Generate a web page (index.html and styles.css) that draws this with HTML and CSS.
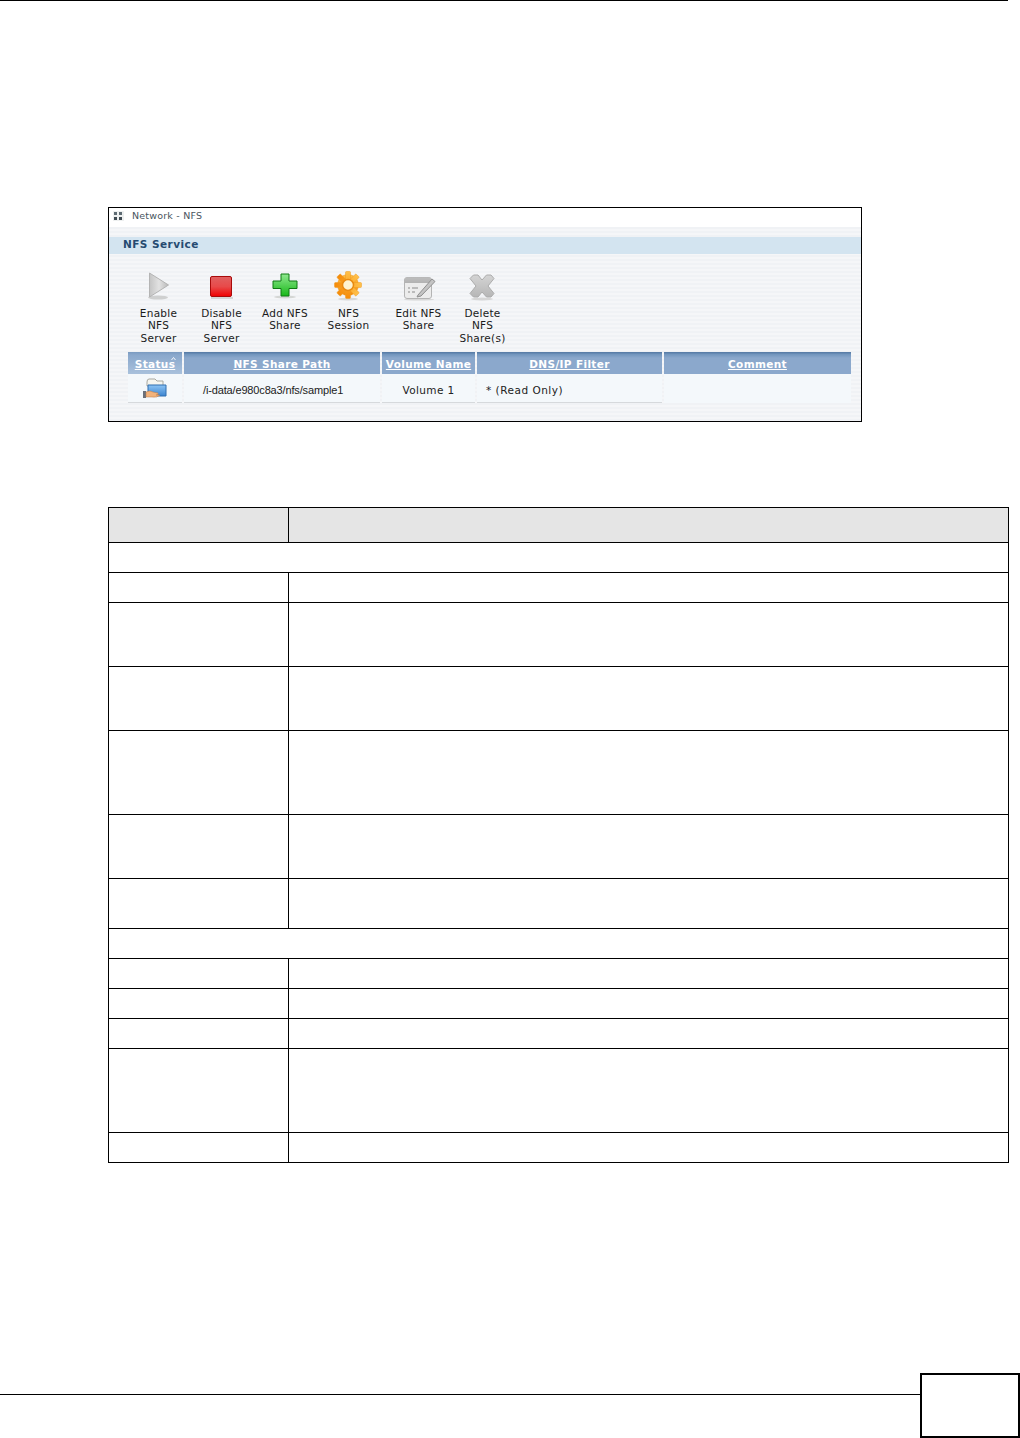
FILE: index.html
```html
<!DOCTYPE html>
<html lang="en">
<head>
<meta charset="utf-8">
<title>NFS Service</title>
<link rel="stylesheet" href="styles.css">
</head>
<body>
<div class="page">
  <div class="top-rule"></div>

  <figure class="shot">
    <div class="crumb">
      <svg class="crumb-icon" width="11" height="10" viewBox="0 0 11 10"><rect width="11" height="10" fill="#eef0f0"/><rect x="1" y="1" width="3" height="3" fill="#5d6a72"/><rect x="6" y="1" width="3" height="3" fill="#5d6a72"/><rect x="1" y="6" width="3" height="3" fill="#3f4a52"/><rect x="6" y="6" width="3" height="3" fill="#3f4a52"/></svg>
      <span>Network - NFS</span>
    </div>
    <div class="panel">
      <div class="band">NFS Service</div>
      <div class="toolbar">
        <div class="tool">
          <svg class="tool-icon" width="40" height="30" viewBox="0 0 40 30"><defs><linearGradient id="gp" x1="0" y1="0" x2="1" y2="0"><stop offset="0" stop-color="#c4c4c4"/><stop offset=".5" stop-color="#e2e2e2"/><stop offset="1" stop-color="#b9b9b9"/></linearGradient></defs><ellipse cx="19" cy="26.500" rx="10" ry="2" fill="#cfd0d0"/><path d="M10.500 2 L29.500 14 L10.500 26 Z" fill="url(#gp)" stroke="#b4b4b4" stroke-linejoin="round"/></svg>
          <span>Enable<br>NFS<br>Server</span>
        </div>
        <div class="tool">
          <svg class="tool-icon" width="40" height="30" viewBox="0 0 40 30"><defs><linearGradient id="gs" x1="0" y1="0" x2="0" y2="1"><stop offset="0" stop-color="#e06060"/><stop offset=".5" stop-color="#e84a4a"/><stop offset="1" stop-color="#f00000"/></linearGradient></defs><rect x="9" y="26" width="22" height="2" fill="#d6d6d6"/><rect x="8.500" y="5.500" width="21" height="20" rx="1.500" fill="url(#gs)" stroke="#a80a0a"/></svg>
          <span>Disable<br>NFS<br>Server</span>
        </div>
        <div class="tool">
          <svg class="tool-icon" width="40" height="30" viewBox="0 0 40 30"><defs><linearGradient id="ga" x1="0" y1="0" x2="0" y2="1"><stop offset="0" stop-color="#8fe88f"/><stop offset="1" stop-color="#18b818"/></linearGradient></defs><ellipse cx="20" cy="26" rx="11" ry="1.500" fill="#d4d6d4"/><path d="M16 3 H24 V10 H32 V17.500 H24 V25 H16 V17.500 H8 V10 H16 Z" fill="url(#ga)" stroke="#0f7a12" stroke-linejoin="round"/></svg>
          <span>Add NFS<br>Share</span>
        </div>
        <div class="tool">
          <svg class="tool-icon" width="40" height="30" viewBox="0 0 40 30"><defs><linearGradient id="gg" x1="0" y1="0" x2="0" y2="1"><stop offset="0" stop-color="#ffc04a"/><stop offset="1" stop-color="#f58a08"/></linearGradient></defs><ellipse cx="19" cy="28" rx="10" ry="1.500" fill="#d8d8d8"/><g fill="url(#gg)" stroke="#ee9a20" stroke-width=".5"><circle cx="19" cy="14" r="10.500"/><rect x="16.500" y="0.500" width="5" height="27" rx="1"/><rect x="16.500" y="0.500" width="5" height="27" rx="1" transform="rotate(45 19 14)"/><rect x="16.500" y="0.500" width="5" height="27" rx="1" transform="rotate(90 19 14)"/><rect x="16.500" y="0.500" width="5" height="27" rx="1" transform="rotate(135 19 14)"/></g><circle cx="19" cy="14" r="5.500" fill="#fff3d0" stroke="#e98a10" stroke-width="1.500"/></svg>
          <span>NFS<br>Session</span>
        </div>
        <div class="tool">
          <svg class="tool-icon" width="40" height="30" viewBox="0 0 40 30"><defs><linearGradient id="ge" x1="0" y1="0" x2="0" y2="1"><stop offset="0" stop-color="#bdbdbd"/><stop offset="1" stop-color="#b2b2b2"/></linearGradient></defs><ellipse cx="20" cy="28.500" rx="15" ry="1" fill="#d8d8d8"/><rect x="5.500" y="6.500" width="27" height="21" rx="2.500" fill="#ececec" stroke="#b4b4b4"/><path d="M5.500 12 V9 Q5.500 6.500 8 6.500 H30 Q32.500 6.500 32.500 9 V12 Z" fill="url(#ge)"/><path d="M9 17 h2 M13 17 h6 M9 21 h2 M13 21 h3" stroke="#8a8a8a" fill="none"/><path d="M19 24 L33 8 L36 10.500 L22 25 L18 26 Z" fill="#c4c4c4" stroke="#8f8f8f" stroke-linejoin="round"/></svg>
          <span>Edit NFS<br>Share</span>
        </div>
        <div class="tool">
          <svg class="tool-icon" width="40" height="30" viewBox="0 0 40 30"><defs><linearGradient id="gx" x1="0" y1="0" x2="0" y2="1"><stop offset="0" stop-color="#d4d4d4"/><stop offset="1" stop-color="#b6b6b6"/></linearGradient></defs><ellipse cx="19" cy="28" rx="11" ry="1.500" fill="#d6d6d6"/><path d="M10.500 4 L15 4 L19 9 L23.500 4 L28 4 L31 7.500 L25 15 L31 22.500 L28 26 L23.500 26 L19 21 L15 26 L10.500 26 L7 22.500 L13 15 L7 7.500 Z" fill="url(#gx)" stroke="#acacac" stroke-linejoin="round"/></svg>
          <span>Delete<br>NFS<br>Share(s)</span>
        </div>
      </div>
      <table class="shares">
        <thead>
          <tr>
            <th class="col-status sorted"><a>Status</a><svg class="sort" width="5" height="7" viewBox="0 0 5 7"><path d="M0.500 3 L2.500 0.500 L4.500 3" fill="none" stroke="#f2f6fa"/></svg></th>
            <th class="col-path"><a>NFS Share Path</a></th>
            <th class="col-volume"><a>Volume Name</a></th>
            <th class="col-filter"><a>DNS/IP Filter</a></th>
            <th class="col-comment"><a>Comment</a></th>
          </tr>
        </thead>
        <tbody>
          <tr>
            <td class="icon-cell">
              <svg width="24" height="21" viewBox="0 0 24 21"><defs><linearGradient id="gf" x1="0" y1="0" x2="0" y2="1"><stop offset="0" stop-color="#8cc4f4"/><stop offset="1" stop-color="#3b84d0"/></linearGradient></defs><path d="M4 4 Q4 1 6 1 H12 L14 3 H20 V8 H4 Z" fill="#f6f6f0" stroke="#a8a8a0"/><path d="M5 7 H23 V18 H5 Z" fill="url(#gf)" stroke="#2e6eb0"/><rect x="0" y="13" width="3" height="7" fill="#6a6f78"/><path d="M3 14 Q7 12 10 14 L15 15 Q16 17 13 17 L17 17 Q14 20 9 19 L3 19 Z" fill="#f2b27a" stroke="#b87a48" stroke-width=".5"/></svg>
            </td>
            <td class="path">/i-data/e980c8a3/nfs/sample1</td>
            <td class="center">Volume 1</td>
            <td class="filter">* (Read Only)</td>
            <td class="empty"></td>
          </tr>
        </tbody>
      </table>
    </div>
  </figure>

  <table class="desc">
    <tr class="r35"><th class="c1"></th><th></th></tr>
    <tr class="r30"><td colspan="2"></td></tr>
    <tr class="r30"><td></td><td></td></tr>
    <tr class="r64"><td></td><td></td></tr>
    <tr class="r64"><td></td><td></td></tr>
    <tr class="r84"><td></td><td></td></tr>
    <tr class="r64"><td></td><td></td></tr>
    <tr class="r50"><td></td><td></td></tr>
    <tr class="r30"><td colspan="2"></td></tr>
    <tr class="r30"><td></td><td></td></tr>
    <tr class="r30"><td></td><td></td></tr>
    <tr class="r30"><td></td><td></td></tr>
    <tr class="r84"><td></td><td></td></tr>
    <tr class="r30"><td></td><td></td></tr>
  </table>

  <footer class="foot">
    <div class="foot-rule"></div>
    <div class="page-box"></div>
  </footer>
</div>
</body>
</html>
```
FILE: styles.css
```css
* { box-sizing: border-box; }
html, body { margin: 0; padding: 0; background: #fff; }
.page {
  width: 1020px;
  height: 1438px;
  display: flex;
  flex-direction: column;
  font-family: "DejaVu Sans", sans-serif;
  color: #1a1a1a;
  overflow: hidden;
}
.top-rule { height: 1px; background: #000; margin: 0 12px 0 0; flex: none; }

.shot {
  flex: none;
  margin: 206px 0 0 108px;
  width: 754px;
  height: 215px;
  border: 1px solid #000;
  display: flex;
  flex-direction: column;
  background: #fff;
}
.crumb {
  height: 15px;
  margin-bottom: 4px;
  display: flex;
  align-items: center;
  gap: 8px;
  padding-left: 4px;
  font-size: 9.500px;
  letter-spacing: .2px;
  color: #4a5560;
  flex: none;
}
.panel {
  flex: 1;
  padding-top: 10px;
  background: repeating-linear-gradient(180deg, #f0f2f5 0, #f0f2f5 2px, #f5f6f8 2px, #f5f6f8 4px);
}
.band {
  height: 17px;
  background: #d3e4f0;
  color: #254a70;
  font-weight: bold;
  font-size: 10.500px;
  letter-spacing: .45px;
  line-height: 15px;
  padding-left: 14px;
}
.toolbar {
  display: grid;
  grid-template-columns: 63px 63px 64px 63px 77px 51px;
  margin: 16px 0 0 18px;
  height: 82px;
  font-size: 10.500px;
  letter-spacing: .25px;
  line-height: 12.500px;
  text-align: center;
}
.tool { display: flex; flex-direction: column; align-items: center; white-space: nowrap; }
.tool-icon { display: block; margin: 1px 0 5.800px; flex: none; }

.shares {
  table-layout: fixed;
  width: 727px;
  margin-left: 17px;
  border-collapse: separate;
  border-spacing: 2px 0;
  font-size: 10.500px;
}
.shares th {
  height: 22px;
  padding: 2px 0 0;
  background: linear-gradient(180deg, #5a7ea8 0, #5a7ea8 1px, #7094bc 2px, #8ba8cc 6px, #8ba8cc 100%);
  color: #fff;
  font-size: 10.500px;
  font-weight: bold;
  letter-spacing: .35px;
  white-space: nowrap;
}
.shares th.sorted {
  background: linear-gradient(180deg, #7a9ac0 0, #8aa8cc 3px, #a9c1dc 100%);
  position: relative;
}
.shares th a { text-decoration: underline; }
.sort { position: absolute; right: 6px; top: 5px; }
.col-status { width: 54px; }
.col-path { width: 196px; }
.col-volume { width: 93px; }
.col-filter { width: 185px; }
.col-comment { width: 187px; }
.shares td {
  height: 29px;
  padding: 4px 0 0;
  background: #f4f8fb;
  border-bottom: 1px solid #d6d9dc;
  color: #222;
  letter-spacing: .35px;
}
.shares td.icon-cell { padding-top: 2px; }
.shares td.empty { border-bottom-color: #f4f8fb; }
.center { text-align: center; }
.shares td svg { display: block; margin: -1px auto 0; }
.shares td.path {
  font-family: "Liberation Sans", sans-serif;
  font-size: 11px;
  letter-spacing: -.15px;
  padding-left: 19px;
}
.shares td.filter { padding-left: 9px; letter-spacing: .5px; }

.desc {
  flex: none;
  margin: 85px 0 0 108px;
  width: 901px;
  border-collapse: collapse;
  table-layout: fixed;
}
.desc th, .desc td { border: 1px solid #000; padding: 0; }
.desc th { background: #e5e5e5; }
.c1 { width: 180px; }
.r30 { height: 30px; }
.r35 { height: 35px; }
.r50 { height: 50px; }
.r64 { height: 64px; }
.r84 { height: 84px; }

.foot { margin-top: auto; flex: none; display: flex; align-items: flex-start; height: 65px; }
.foot-rule { flex: 1; height: 1px; background: #000; margin-top: 21px; }
.page-box { width: 100px; height: 65px; border: 2px solid #000; }
```
